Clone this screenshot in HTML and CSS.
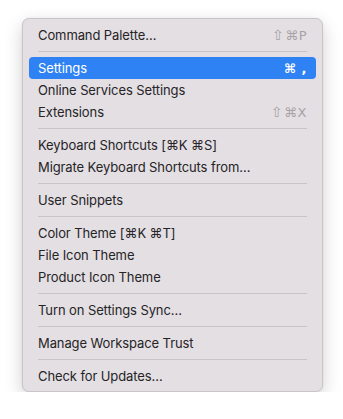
FILE: index.html
```html
<!DOCTYPE html>
<html lang="en">
<head>
    <meta charset="UTF-8">
    <meta name="viewport" content="width=device-width, initial-scale=1.0">
    <title>Preferences menu</title>
    <link rel="stylesheet" href="styles.css">
</head>
<body>
    <div class="menu">
        <div class="item"><span>Command Palette…</span><span class="key"><span class="shift">⇧</span>⌘P</span></div>
        <div class="sep"></div>
        <div class="item active"><span>Settings</span><span class="key">⌘ ,</span></div>
        <div class="item"><span>Online Services Settings</span></div>
        <div class="item"><span>Extensions</span><span class="key"><span class="shift">⇧</span>⌘X</span></div>
        <div class="sep"></div>
        <div class="item"><span>Keyboard Shortcuts [⌘K ⌘S]</span></div>
        <div class="item"><span>Migrate Keyboard Shortcuts from…</span></div>
        <div class="sep"></div>
        <div class="item"><span>User Snippets</span></div>
        <div class="sep"></div>
        <div class="item"><span>Color Theme [⌘K ⌘T]</span></div>
        <div class="item"><span>File Icon Theme</span></div>
        <div class="item"><span>Product Icon Theme</span></div>
        <div class="sep"></div>
        <div class="item"><span>Turn on Settings Sync…</span></div>
        <div class="sep"></div>
        <div class="item"><span>Manage Workspace Trust</span></div>
        <div class="sep"></div>
        <div class="item"><span>Check for Updates…</span></div>
    </div>
</body>
</html>
```

FILE: styles.css
```css
body {
    margin: 0;
    background-color: #ffffff;
    font-family: Inter, "Noto Sans", "DejaVu Sans", sans-serif;
    font-size: 13px;
    letter-spacing: -0.1px;
    color: #262426;
}
.menu {
    width: 287px;
    margin: 18px 0 0 22px;
    padding: 5px 6px 4px;
    background-color: #e3dfe3;
    border: 1px solid #c9c5c9;
    border-radius: 7px;
    box-shadow: 0 6px 18px rgba(0,0,0,0.18), 0 0 2px rgba(0,0,0,0.08);
}
.item {
    height: 22px;
    padding: 0 9px;
    display: flex;
    align-items: center;
    justify-content: space-between;
    border-radius: 4px;
}
.item.active {
    background-color: #2f82f4;
    color: #ffffff;
}
.key {
    color: #a6a3a6;
    font-family: "DejaVu Sans", sans-serif;
    font-size: 13px;
    letter-spacing: 0.5px;
}
.shift {
    font-size: 14px;
    margin-right: 1px;
}
.active .key {
    color: #ffffff;
    font-weight: bold;
}
.sep {
    height: 1px;
    margin: 5px 9px;
    background-color: #c8c4c8;
}
```
